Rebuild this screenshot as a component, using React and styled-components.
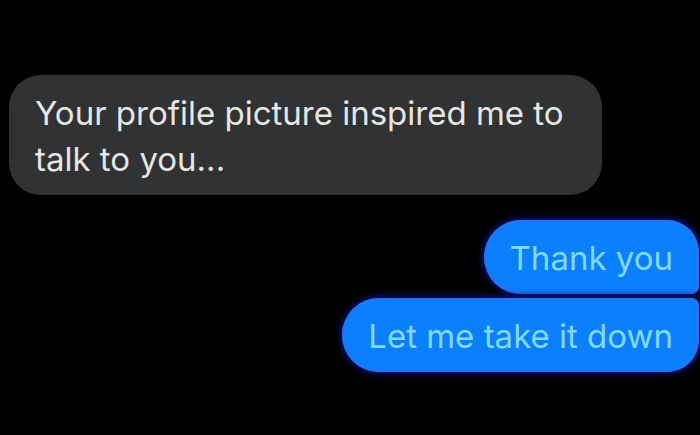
import React from 'react';
import styled, { createGlobalStyle } from 'styled-components';

const GlobalStyle = createGlobalStyle`
  body {
    margin: 0;
    background: #000;
    font-family: Inter, 'Liberation Sans', sans-serif;
  }
`;

const Chat = styled.main`
  box-sizing: border-box;
  min-height: 100vh;
  display: flex;
  flex-direction: column;
  gap: 25px;
  padding: 75px 1px 60px 9px;
`;

const Group = styled.section`
  display: flex;
  flex-direction: column;
  align-items: ${({ $mine }) => ($mine ? 'flex-end' : 'flex-start')};
  gap: 4px;
`;

const Bubble = styled.p`
  box-sizing: border-box;
  max-width: 593px;
  margin: 0;
  padding: 15px 26px 13px;
  border-radius: 32px;
  background: #313233;
  color: #e6e6e3;
  font-size: 33px;
  line-height: 46px;
`;

// the corners that touch inside a group are squared off
const MyBubble = styled(Bubble)`
  border-radius: ${({ $last }) => ($last ? '37px 8px 32px 37px' : '37px 32px 8px 37px')};
  background: #0a80ff;
  color: #80daf4;
  box-shadow: inset 0 0 3px 1px #3f68e4, 0 0 6px 2px #031480;
`;

const App = () => {
  return (
    <>
      <GlobalStyle />
      <Chat>
        <Group>
          <Bubble>Your profile picture inspired me to talk to you...</Bubble>
        </Group>
        <Group $mine>
          <MyBubble>Thank you</MyBubble>
          <MyBubble $last>Let me take it down</MyBubble>
        </Group>
      </Chat>
    </>
  );
};

export default App;
